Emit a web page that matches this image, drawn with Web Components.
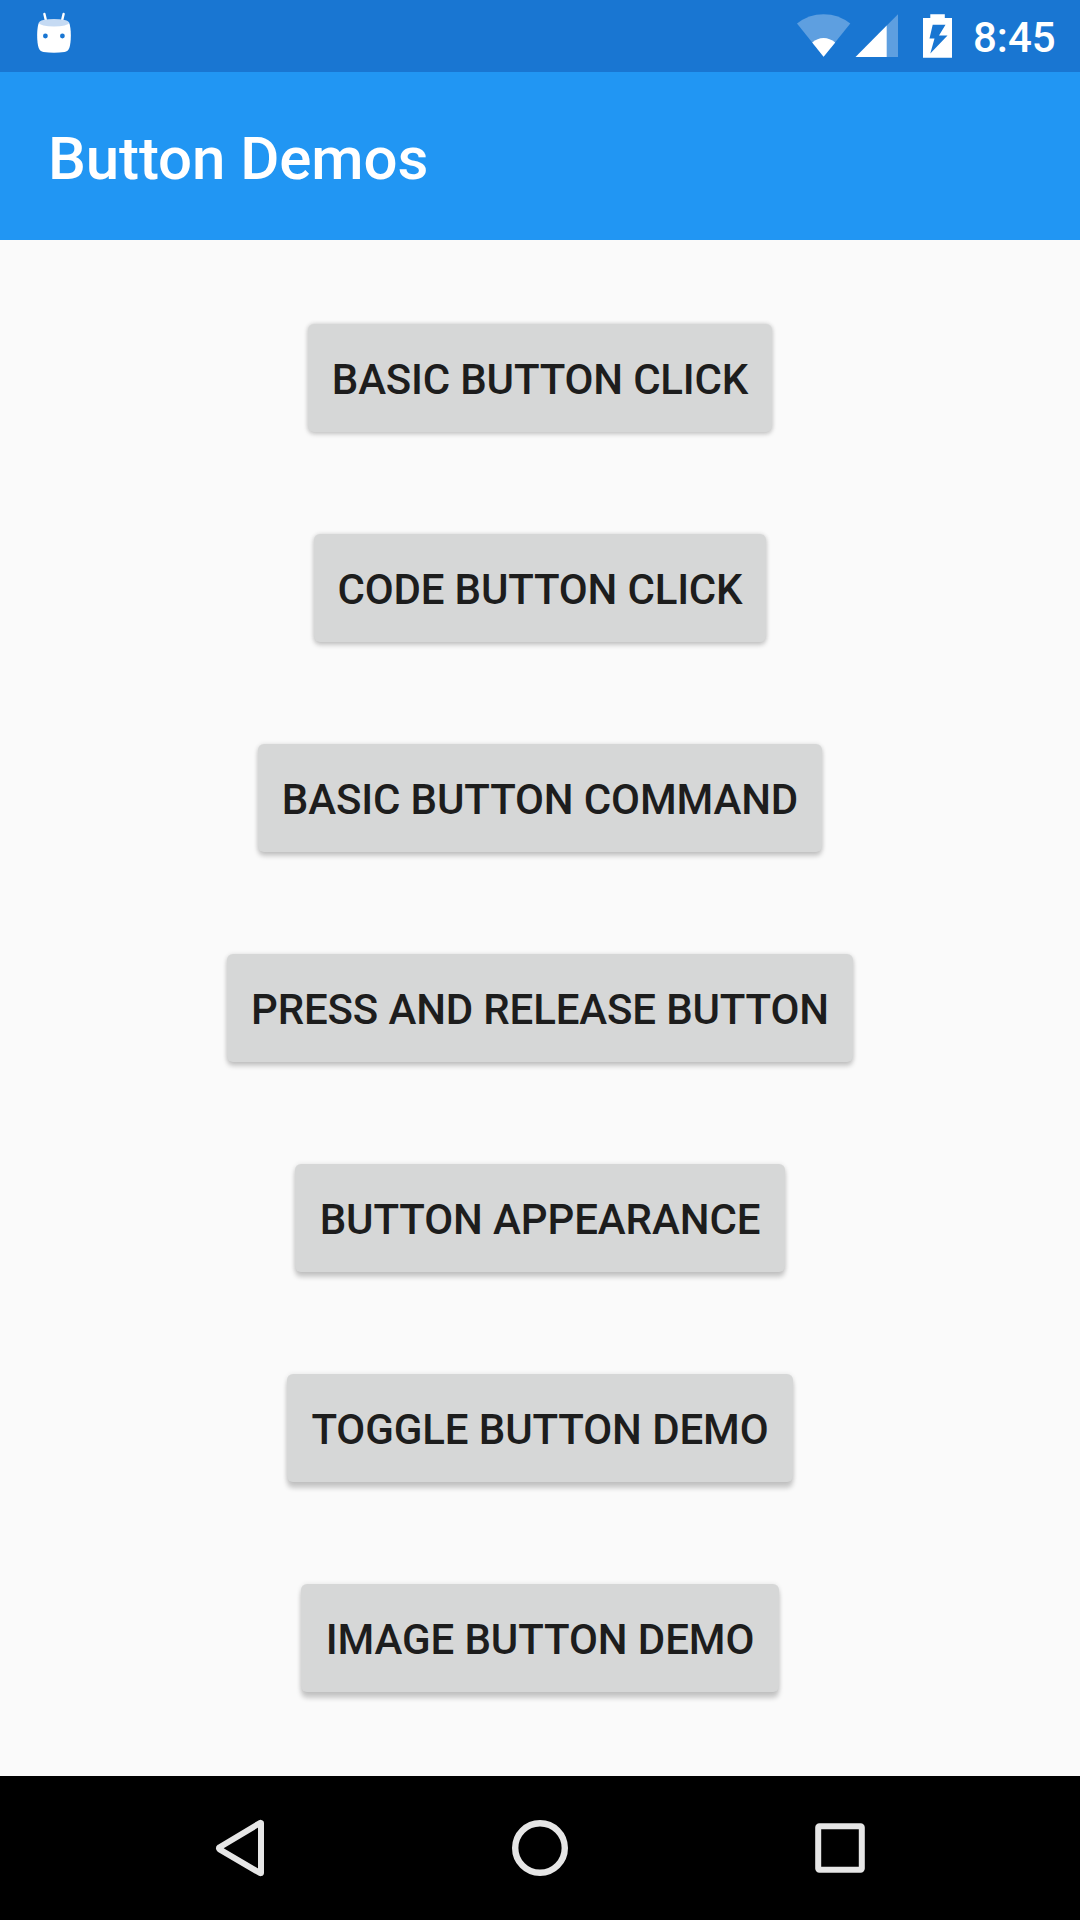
<!DOCTYPE html>
<html lang="en">
<head>
<meta charset="utf-8">
<title>Button Demos</title>
<style>
html,body{margin:0;padding:0}
body{width:1080px;height:1920px;overflow:hidden;font-family:Roboto,"Noto Sans",sans-serif;background:#fafafa}
</style>
</head>
<body>
<phone-screen>
  <status-bar slot="status">8:45</status-bar>
  <app-bar slot="header">Button Demos</app-bar>
  <demo-button level="1" width="464" tracking="-0.18">BASIC BUTTON CLICK</demo-button>
  <demo-button level="2" width="452" tracking="-0.18">CODE BUTTON CLICK</demo-button>
  <demo-button level="3" width="564" tracking="-0.13">BASIC BUTTON COMMAND</demo-button>
  <demo-button level="4" width="626" tracking="-0.15">PRESS AND RELEASE BUTTON</demo-button>
  <demo-button level="5" width="490" tracking="-0.1">BUTTON APPEARANCE</demo-button>
  <demo-button level="6" width="506" tracking="-0.1">TOGGLE BUTTON DEMO</demo-button>
  <demo-button level="7" width="478" tracking="-0.1">IMAGE BUTTON DEMO</demo-button>
  <navigation-bar slot="nav"></navigation-bar>
</phone-screen>
<script>
const define = (name, html, setup) => customElements.define(name, class extends HTMLElement {
  constructor() {
    super();
    this.attachShadow({ mode: 'open' }).innerHTML = html;
  }
  connectedCallback() { if (setup) setup(this); }
});

define('phone-screen', `
<style>
:host{display:flex;flex-direction:column;width:1080px;height:1920px;background:#fafafa}
main{flex:1;display:flex;flex-direction:column;align-items:center;gap:102px;padding-top:84px;box-sizing:border-box;min-height:0}
</style>
<slot name="status"></slot><slot name="header"></slot>
<main><slot></slot></main>
<slot name="nav"></slot>`);

define('status-bar', `
<style>
:host{display:flex;height:72px;flex:none;background:#1976d2;color:#fff;font-size:42px;font-weight:500;line-height:72px}
.left{flex:1}
svg{display:block}
.time{padding-top:2px;width:107px;box-sizing:border-box}
</style>
<div class="left"><svg width="100" height="72" viewBox="0 0 100 72">
<path d="M44.4 13.9l1.9 8.2M63.6 13.9L61.7 22" stroke="#fff" stroke-width="2.4" stroke-linecap="round"/>
<path d="M38.9 22.5C36.6 28 36.6 42 38.7 48Q40 51.4 43.5 52.1Q54 53.6 64.5 52.1Q68 51.4 69.3 48C71.4 42 71.4 28 69.1 22.5Z" fill="#fff"/>
<ellipse cx="54" cy="22.8" rx="15" ry="3.8" fill="#c5daf3"/>
<circle cx="45.4" cy="36" r="2.4" fill="#1976d2"/><circle cx="62.4" cy="36" r="2.4" fill="#1976d2"/>
</svg></div>
<svg width="193" height="72" viewBox="780 0 193 72">
<path d="M823.6 56.8L797 23.6Q808.5 14.2 823.6 14.2T850.3 23.6Z" fill="#5e9fe0"/>
<path d="M823.6 56.8L812.2 42.5Q817.3 38 823.6 38T835.2 42.5Z" fill="#fff"/>
<path d="M898 14.3V57H886V26.3Z" fill="#5e9fe0"/>
<path d="M886.7 25.6V57H855.5Z" fill="#fff"/>
<path fill="#fff" fill-rule="evenodd" d="M930.3 14.2H944.8V18H952V57.8H923V18H930.3ZM932.7 24.7L929.5 38.5H934.5L930.3 53.5L947.5 35.5H939L945.5 24.7Z"/>
</svg>
<div class="time"><slot></slot></div>`);

define('app-bar', `
<style>
:host{display:flex;align-items:center;height:168px;flex:none;box-sizing:border-box;padding:5px 48px 0;background:#2196f3;color:#fff;font-size:60px;font-weight:500;line-height:70px;letter-spacing:-.1px;white-space:pre}
</style><slot></slot>`);

define('demo-button', `
<style>
:host{display:block;flex:none}
button{display:flex;align-items:center;justify-content:center;width:100%;height:108px;box-sizing:border-box;margin:0;padding:3px 0 0;border:0;border-radius:6px;background:#d6d7d7;color:#1d1d1d;font:500 42px/50px Roboto,"Noto Sans",sans-serif;letter-spacing:var(--tracking);white-space:nowrap;
box-shadow:0 var(--drop) 5px rgba(0,0,0,.2),0 0 5px rgba(0,0,0,.09)}
</style><button type="button"><slot></slot></button>`,
el => {
  el.style.width = el.getAttribute('width') + 'px';
  el.style.setProperty('--tracking', el.getAttribute('tracking') + 'px');
  el.style.setProperty('--drop', (1.2 + Number(el.getAttribute('level')) * 0.65) + 'px');
});

define('navigation-bar', `
<style>
:host{display:flex;justify-content:center;align-items:center;height:144px;flex:none;background:#000}
div{width:300px;display:flex;justify-content:center}
svg{display:block;fill:none;stroke:#e6e6e6;stroke-width:6}
</style>
<div><svg width="60" height="60" viewBox="210 1818 60 60"><path stroke-linejoin="round" d="M261 1823.2V1872.8Q261 1873.4 260 1873L219.6 1849.4Q218.2 1848.3 219.6 1847.2L260 1823Q261 1822.6 261 1823.2Z"/></svg></div>
<div><svg width="60" height="60" viewBox="0 0 60 60"><circle cx="30" cy="30" r="24.8" stroke-width="6.4"/></svg></div>
<div><svg width="60" height="60" viewBox="810 1818 60 60"><rect x="818.2" y="1826.2" width="43.6" height="43.6" rx="1.2"/></svg></div>`);
</script>
</body>
</html>
